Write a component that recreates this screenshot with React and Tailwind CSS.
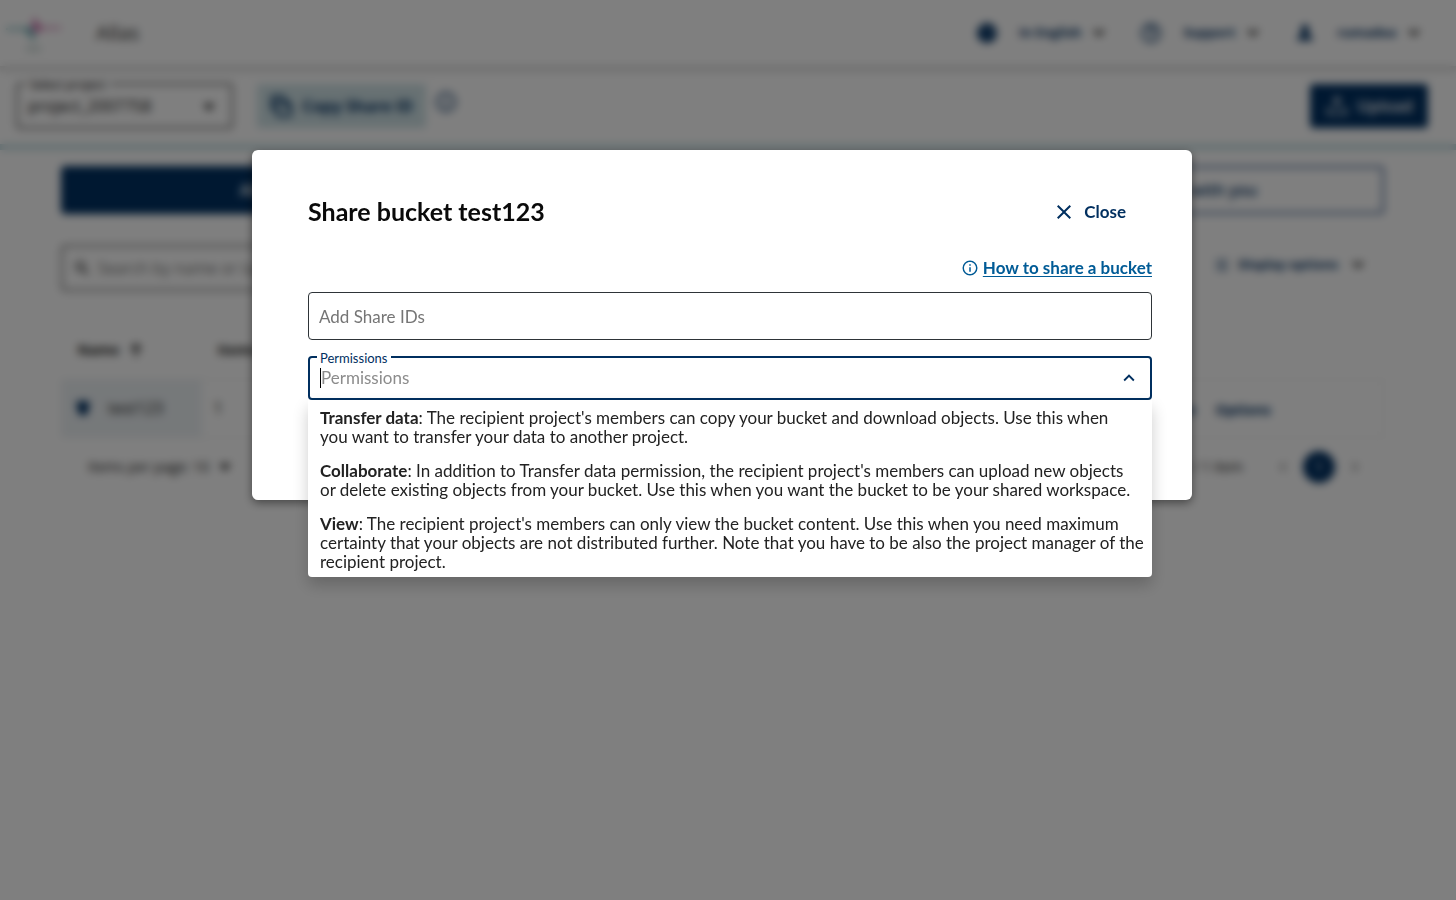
import React from "react";

const PATHS = {
  close:
    "M19,6.41L17.59,5L12,10.59L6.41,5L5,6.41L10.59,12L5,17.59L6.41,19L12,13.41L17.59,19L19,17.59L13.41,12L19,6.41Z",
  info: "M11,9H13V7H11M12,20C7.59,20 4,16.41 4,12C4,7.59 7.59,4 12,4C16.41,4 20,7.59 20,12C20,16.41 16.41,20 12,20M12,2A10,10 0 0,0 2,12A10,10 0 0,0 12,22A10,10 0 0,0 22,12A10,10 0 0,0 12,2M11,17H13V11H11V17Z",
  up: "M7.41,15.41L12,10.83L16.59,15.41L18,14L12,8L6,14L7.41,15.41Z",
  downBold: "M7.5,7.5L12,11.5L16.5,7.5L19,9.5L12,16.5L5,9.5L7.5,7.5Z",
  caretBold: "M5,8L12,17L19,8H5Z",
  left: "M15.41,16.58L10.83,12L15.41,7.41L14,6L8,12L14,18L15.41,16.58Z",
  right: "M8.59,16.58L13.17,12L8.59,7.41L10,6L16,12L10,18L8.59,16.58Z",
  globe:
    "M12,2A10,10 0 0,0 2,12A10,10 0 0,0 12,22A10,10 0 0,0 22,12A10,10 0 0,0 12,2M8,6L10,7L8,9L6,10L8,6M16,8L18,10L17,13L15,11L16,8M9,14L11,16L10,19L9,14Z",
  help: "M11,18H13V16H11V18M12,2A10,10 0 0,0 2,12A10,10 0 0,0 12,22A10,10 0 0,0 22,12A10,10 0 0,0 12,2M12,20C7.59,20 4,16.41 4,12C4,7.59 7.59,4 12,4C16.41,4 20,7.59 20,12C20,16.41 16.41,20 12,20M12,6A4,4 0 0,0 8,10H10A2,2 0 0,1 12,8A2,2 0 0,1 14,10C14,12 11,11.75 11,15H13C13,12.75 16,12.500 16,10A4,4 0 0,0 12,6Z",
  person:
    "M12,2A5,5 0 0,1 17,7C17,9.500 15.500,12 14.500,13L20,16C21,17 21,19 21,21H3C3,19 3,17 4,16L9.500,13C8.500,12 7,9.500 7,7A5,5 0 0,1 12,2Z",
  copy: "M4,17H1V4A3,3 0 0,1 4,1H15V3H5A1,1 0 0,0 4,4V17M9,5H16L22,11V20A3,3 0 0,1 19,23H9A3,3 0 0,1 6,20V8A3,3 0 0,1 9,5M9,7.500A1,1 0 0,0 8.500,8V20A1,1 0 0,0 9,20.500H19A1,1 0 0,0 19.500,20V13H14V7.500H9Z",
  upload:
    "M12,2L16.500,7H13V15H11V7H7.500L12,2M2,14H8V15.500H3.500V19.500H20.500V15.500H16V14H22V21H2V14Z",
  search:
    "M9.500,3A6.500,6.500 0 0,1 16,9.500C16,11.110 15.410,12.590 14.440,13.730L20.500,19.790L19,21.290L13,15.280A6.500,6.500 0 0,1 3,9.500A6.500,6.500 0 0,1 9.500,3M9.500,5C7,5 5,7 5,9.500C5,12 7,14 9.500,14C12,14 14,12 14,9.500C14,7 12,5 9.500,5Z",
  sort: "M10.500,21V8L6,12.500L4,10.500L12,2.500L20,10.500L18,12.500L13.500,8V21H10.500Z",
  tune: "M3,4H11V6H3V4M15,4H21V6H15V4M3,11H7V13H3V11M11,11H21V13H11V11M3,18H13V20H3V18M17,18H21V20H17V18M12,3H14V8H12V3M8,9H10V15H8V9M14,16H16V22H14V16Z",
  bucket: "M3,4C3,2 21,2 21,4L18,20C17,22 7,22 6,20L3,4Z",
};

function Icon({ name, className }) {
  return (
    <svg viewBox="0 0 24 24" fill="currentColor" aria-hidden="true" className={className}>
      <path d={PATHS[name]} />
    </svg>
  );
}

function Header() {
  return (
    <header className="flex h-[66px] items-center justify-between pr-8 pl-1 shadow-[0_4px_6px_rgba(0,0,0,0.2)]">
      <div className="flex items-center gap-8">
        <svg viewBox="0 0 60 40" className="h-10 w-[60px]" aria-hidden="true">
          <path d="M2 15H22L28 14V18L31 22L29 29L26 22L20 17H2Z" fill="#17808a" opacity="0.75" />
          <path d="M30 3L34 11L38 14H57V16H38L33 20L28 15Z" fill="#b0187a" opacity="0.65" />
          <path d="M22 34H37V38H22Z" fill="#a5bcb8" opacity="0.7" />
        </svg>
        <span className="text-xl text-[#303030]">Allas</span>
      </div>
      <nav className="flex items-center text-[13px] font-bold text-[#003062]">
        <button className="mr-[30px] flex items-center">
          <Icon name="globe" className="mr-5 size-6" />
          In English
          <Icon name="downBold" className="ml-2 size-5 text-[#333]" />
        </button>
        <button className="mr-8 flex items-center">
          <Icon name="help" className="mr-5 size-6" />
          Support
          <Icon name="downBold" className="ml-2 size-5 text-[#333]" />
        </button>
        <button className="flex items-center">
          <Icon name="person" className="mr-[22px] size-5" />
          rumadea
          <Icon name="downBold" className="ml-2 size-5 text-[#333]" />
        </button>
      </nav>
    </header>
  );
}

function Toolbar() {
  return (
    <div className="flex h-[84px] items-center justify-between border-b-[6px] border-[#c6dde2] pt-0.5 pr-7 pl-4">
      <div className="flex items-center">
        <div className="relative h-[46px] w-[217px] rounded border-2 border-[#666]">
          <label htmlFor="project" className="absolute -top-2 left-2 bg-white px-1 text-xs leading-4">
            Select project
          </label>
          <select id="project" className="size-full appearance-none bg-transparent pl-2.5 text-base text-[#111]">
            <option>project_2007758</option>
          </select>
          <Icon name="caretBold" className="pointer-events-none absolute top-3 right-3 size-5 text-[#333]" />
        </div>
        <button className="ml-6 flex h-11 w-[169px] items-center justify-center gap-2 bg-[#cfe2e6] text-base font-bold text-[#003062]">
          <Icon name="copy" className="size-6" />
          Copy Share ID
        </button>
        <Icon name="info" className="mb-2 ml-2 size-6 text-[#003062]" />
      </div>
      <button className="flex h-11 w-[118px] items-center justify-center gap-2 rounded bg-[#003062] text-base font-semibold text-white">
        <Icon name="upload" className="size-6" />
        Upload
      </button>
    </div>
  );
}

function BucketPage() {
  return (
    <main className="pt-4 pr-[72px] pl-[61px] text-[#222]">
      <div className="grid h-12 grid-cols-3 text-base font-semibold text-[#003062]">
        <button className="rounded-l bg-[#003062] text-white">All buckets</button>
        <button className="border-y-2 border-r-2 border-[#33568a]">Buckets you have shared</button>
        <button className="rounded-r border-y-2 border-r-2 border-[#33568a]">Buckets shared with you</button>
      </div>
      <div className="mt-[31px] flex items-center justify-between">
        <div className="flex h-[46px] w-[400px] items-center gap-1.5 rounded border-2 border-[#777] px-2.5">
          <Icon name="search" className="size-5" />
          <input aria-label="Search" placeholder="Search by name or tag" className="w-full text-base outline-none placeholder:text-[#777]" />
        </div>
        <button className="mr-4 mb-1.5 flex items-center text-[13px] font-bold text-[#003062]">
          <Icon name="tune" className="mr-2 size-4" />
          Display options
          <Icon name="downBold" className="ml-2.5 size-5 text-[#333]" />
        </button>
      </div>
      <table className="mt-7 w-full table-fixed text-left text-sm">
        <thead>
          <tr className="h-[60px] text-sm">
            <th className="w-[140px] pt-0.5 pl-4">
              <span className="flex items-center gap-2">
                Name
                <Icon name="sort" className="size-[18px]" />
              </span>
            </th>
            <th className="pt-0.5 pl-4">Items</th>
            <th className="w-[283px]" aria-label="Actions" />
          </tr>
        </thead>
        <tbody>
          <tr className="h-[58px] border border-[#ececec]">
            <td className="bg-[#edf2f5] pl-3">
              <a href="#test123" className="flex items-center gap-4 text-base">
                <Icon name="bucket" className="size-[18px] text-[#003062]" />
                test123
              </a>
            </td>
            <td className="pl-3 text-base">1</td>
            <td className="font-bold text-[#003062]">
              <div className="flex items-center gap-5 pt-1 pl-4">
                <button className="w-[79px] text-right">Share</button>
                <button>Options</button>
              </div>
            </td>
          </tr>
        </tbody>
      </table>
      <div className="flex h-[58px] items-center justify-between pr-[19px] pl-[27px] text-sm">
        <div className="flex items-center gap-1.5">
          Items per page: 10
          <Icon name="caretBold" className="size-5 text-[#333]" />
        </div>
        <div className="flex items-center">
          1 - 1 / 1 item
          <Icon name="left" className="ml-[30px] size-5 text-[#777]" />
          <span className="mx-2.5 flex size-8 items-center justify-center rounded-full bg-[#003062] text-white">1</span>
          <Icon name="right" className="size-5 text-[#777]" />
        </div>
      </div>
    </main>
  );
}

const PERMISSIONS = [
  {
    name: "Transfer data",
    text: "The recipient project's members can copy your bucket and download objects. Use this when\nyou want to transfer your data to another project.",
  },
  {
    name: "Collaborate",
    text: "In addition to Transfer data permission, the recipient project's members can upload new objects\nor delete existing objects from your bucket. Use this when you want the bucket to be your shared workspace.",
  },
  {
    name: "View",
    text: "The recipient project's members can only view the bucket content. Use this when you need maximum\ncertainty that your objects are not distributed further. Note that you have to be also the project manager of the\nrecipient project.",
  },
];

function ShareDialog() {
  return (
    <section
      role="dialog"
      aria-labelledby="share-title"
      className="w-[940px] rounded-md bg-white pt-10 pr-10 pb-[100px] pl-14 font-['Lato',sans-serif] shadow-[0_3px_10px_rgba(0,0,0,0.45)]"
    >
      <div className="flex h-11 items-center justify-between">
        <h2 id="share-title" className="text-[25px] font-bold text-[#0a0a0a]">
          Share bucket test123
        </h2>
        <button className="mr-[26px] flex items-center gap-2 text-[17px] font-bold text-[#002f5f]">
          <Icon name="close" className="size-6" />
          Close
        </button>
      </div>
      <div className="mt-5 flex h-7 items-center justify-end gap-1 text-[#005b96]">
        <Icon name="info" className="size-[18px]" />
        <a href="#help" className="text-[17px] font-bold underline underline-offset-2">
          How to share a bucket
        </a>
      </div>
      <input
        aria-label="Add Share IDs"
        placeholder="Add Share IDs"
        className="mt-2.5 block h-12 w-full rounded border border-[#2e3438] px-2.5 text-[17px] outline-none placeholder:text-[#757575]"
      />
      <div className="relative mt-4 h-11 rounded border-2 border-[#002f5f]">
        <label
          htmlFor="permissions"
          className="absolute -top-2 left-[7px] bg-white px-[3px] text-[13px] leading-4 text-[#002f5f]"
        >
          Permissions
        </label>
        <div className="flex h-full items-center pr-2.5 pl-2.5">
          <span className="h-5 w-px bg-black" />
          <input
            id="permissions"
            placeholder="Permissions"
            role="combobox"
            aria-expanded="true"
            aria-controls="permission-list"
            className="min-w-0 flex-1 text-[17px] outline-none placeholder:text-[#8c8c8c]"
          />
          <Icon name="up" className="size-[22px] text-[#002f5f]" />
        </div>
        <ul
          id="permission-list"
          role="listbox"
          className="absolute -inset-x-0.5 top-[42px] flex flex-col gap-[15px] rounded-b bg-white pt-2 pr-1 pb-1.5 pl-3 text-[17px] leading-[19px] text-[#222] shadow-[0_8px_16px_rgba(0,0,0,0.2)]"
        >
          {PERMISSIONS.map((p) => (
            <li key={p.name} role="option" aria-selected="false" className="whitespace-pre-line">
              <b className="font-bold">{p.name}</b>: {p.text}
            </li>
          ))}
        </ul>
      </div>
    </section>
  );
}

export default function App() {
  return (
    <div className="min-h-screen bg-white font-['Open_Sans',sans-serif]">
      <Header />
      <Toolbar />
      <BucketPage />
      <div className="fixed inset-0 flex items-start justify-center bg-black/50 pt-[150px] pr-3 backdrop-blur-[4px]">
        <ShareDialog />
      </div>
    </div>
  );
}
